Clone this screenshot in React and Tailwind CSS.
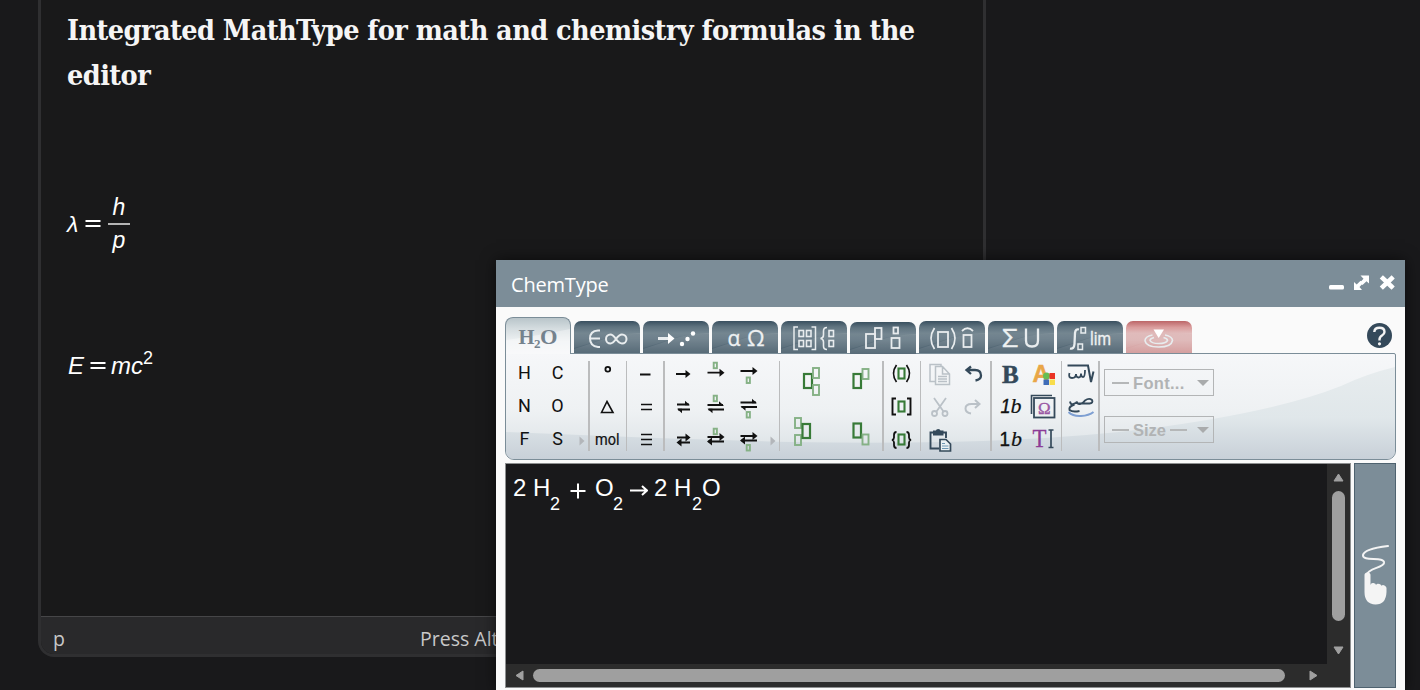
import React from "react";

const INK = "#111";
const SLATE = "#34495a";

/* ---------- shared drawing helpers ---------- */
function Cell({ children }) {
  return (
    <svg className="block h-[33px] w-[33px]" viewBox="0 0 33 33" fill="none">
      {children}
    </svg>
  );
}

function Sep({ thick }) {
  return <div className={thick ? "mt-[4px] h-[90px] w-[2px] shrink-0 bg-[#bbbcbd]" : "mt-[4px] h-[90px] w-px shrink-0 bg-[#bbbcbd]"} />;
}

function Glyph({ t, x = 16.5, y = 22, size = 18 }) {
  return (
    <Cell>
      <text x={x} y={y} textAnchor="middle" fontSize={size} fill={INK} fontFamily="Roboto, 'Liberation Sans', sans-serif">{t}</text>
    </Cell>
  );
}

const Box = ({ x, y, w, h, c = "#85b185", s = 1.9 }) => <rect x={x} y={y} width={w} height={h} stroke={c} strokeWidth={s} />;

const Right = ({ x1, x2, y, half }) => (
  <>
    <path d={`M${x1} ${y}H${x2 - 1}`} stroke={INK} strokeWidth="1.8" />
    <path d={half ? `M${x2 - 5} ${y - 3.8}L${x2} ${y + 0.8}H${x2 - 5}Z` : `M${x2 - 4.5} ${y - 4}L${x2 + 0.5} ${y}L${x2 - 4.5} ${y + 4}Z`} fill={INK} />
  </>
);
const Left = ({ x1, x2, y, half }) => (
  <>
    <path d={`M${x1 + 1} ${y}H${x2}`} stroke={INK} strokeWidth="1.8" />
    <path d={half ? `M${x1 + 5} ${y + 3.8}L${x1} ${y - 0.8}H${x1 + 5}Z` : `M${x1 + 4.5} ${y - 4}L${x1 - 0.5} ${y}L${x1 + 4.5} ${y + 4}Z`} fill={INK} />
  </>
);

/* ---------- tabs ---------- */
const tabText = { fontFamily: "'Open Sans', 'Noto Sans', sans-serif", fill: "#f0f2f3" };

function Tab({ children, red, low }) {
  return (
    <div
      className={
        (red
          ? "bg-[linear-gradient(#b95e60_0%,#d99898_20%,#dfb8b8_38%,#ddb6b6_60%,#d39a9a_100%)] "
          : "bg-[linear-gradient(#2f4757_0%,#576c79_18%,#6d808b_38%,#677a86_55%,#485d6b_100%)] ") +
        (low ? "mb-[-1px] " : "") +
        "relative h-[32px] w-[66px] shrink-0 overflow-hidden rounded-t-[7px]"
      }
    >
      <svg className="block h-[32px] w-[66px]" viewBox="0 0 66 32" fill="none">
        <path d="M0 27Q14 23 28 18T66 13V0H0Z" fill="#fff" opacity="0.05" />
        <path d="M0 28Q16 23 30 18T66 12V32H0Z" fill="#fff" opacity={red ? 0.06 : 0.09} />
        <g stroke="#e8ecee" strokeWidth="1.8">{children}</g>
      </svg>
    </div>
  );
}

function Tabs() {
  return (
    <div className="relative z-10 flex h-[37px] items-end gap-[3px]">
      <div className="mb-0 h-[37px] w-[66px] shrink-0 rounded-t-[8px] border border-b-0 border-[#7b8d98] bg-[linear-gradient(#b9c5ca_0%,#d5dde0_30%,#eef1f3_65%,#f5f6f8_100%)]">
        <svg className="block h-[36px] w-[64px]" viewBox="0 0 64 36">
          <path d="M0 22Q30 18 64 11V36H0Z" fill="#fff" opacity="0.35" />
          <g fontFamily="'Liberation Serif', serif" fontWeight="bold" fill="#74828d">
            <text x="12.5" y="26" fontSize="22" textLength="16" lengthAdjust="spacingAndGlyphs">H</text>
            <text x="28" y="30" fontSize="13">2</text>
            <text x="34" y="26" fontSize="22" textLength="17.5" lengthAdjust="spacingAndGlyphs">O</text>
          </g>
        </svg>
      </div>
      <div className="mb-[1px] flex items-end gap-[3px]">
        <Tab>
          <path d="M26 9.5H24Q16 10 16 17.5T24 26H26M17 17.5H26" strokeWidth="2" />
          <path d="M42 18C39.5 14.5 38 13.5 36.5 13.5A4.5 4.5 0 0 0 36.5 22.5C38 22.5 39.500 21.500 42 18S46 13.500 48 13.500A4.500 4.500 0 0 1 48 22.500C46 22.500 44.500 21.500 42 18Z" strokeWidth="2" />
        </Tab>
        <Tab>
          <path d="M15 17.500H27" strokeWidth="3" />
          <path d="M25 12L31.500 17.500L25 23Z" fill="#fff" stroke="none" />
          <g fill="#fff" stroke="none"><circle cx="39" cy="23" r="2.2" /><circle cx="44.500" cy="18" r="2.2" /><circle cx="50" cy="12.500" r="2.2" /></g>
        </Tab>
        <Tab>
          <g strokeWidth="0.3">
            <text x="15.500" y="25" fontSize="21" style={tabText}>α</text>
            <text x="35" y="25" fontSize="22.5" style={tabText}>Ω</text>
          </g>
        </Tab>
        <Tab>
          <path d="M17 6H13V28.500H17M30.500 6H34.500V28.500H30.500" strokeWidth="1.500" />
          <g strokeWidth="1.600"><rect x="18" y="9.500" width="4.500" height="6" /><rect x="25.500" y="9.500" width="4.500" height="6" /><rect x="18" y="19.500" width="4.500" height="6" /><rect x="25.500" y="19.500" width="4.500" height="6" />
            <rect x="48" y="9.500" width="4.500" height="6" /><rect x="48" y="19.500" width="4.500" height="6" /></g>
          <path d="M46 6.500Q42.500 6.500 42.500 10V14Q42.500 17 39.500 17.500Q42.500 18 42.500 21V25Q42.500 28.500 46 28.500" strokeWidth="1.600" />
        </Tab>
        <Tab low>
          <rect x="16" y="12" width="9" height="14" /><rect x="25" y="6" width="6.500" height="11" />
          <rect x="43.500" y="5.500" width="4.500" height="6" /><rect x="41.500" y="16" width="8" height="10" />
        </Tab>
        <Tab>
          <rect x="19" y="11" width="10" height="15" />
          <path d="M15.500 7Q8.500 17.500 15.500 28M32.500 7Q39.500 17.500 32.500 28" />
          <rect x="44.500" y="14" width="8" height="12" />
          <path d="M43 10Q48.500 4.500 54 10" />
        </Tab>
        <Tab>
          <text x="14" y="26" fontSize="25" strokeWidth="0.4" style={tabText} textLength="16" lengthAdjust="spacingAndGlyphs">Σ</text>
          <path d="M38 7.500V19.500Q38 25.500 44 25.500T50 19.500V7.500" strokeWidth="2.300" />
        </Tab>
        <Tab>
          <path d="M22 8.500Q18.500 7.500 18 12L17.500 23Q17 28.500 13 27.500" strokeWidth="2.300" />
          <rect x="24" y="6.500" width="4.500" height="5.500" strokeWidth="1.500" /><rect x="21" y="23" width="4.500" height="5.500" strokeWidth="1.500" />
          <text x="33" y="24" fontSize="18" strokeWidth="0.300" fill="#f0f2f3" fontFamily="Roboto" textLength="21" lengthAdjust="spacingAndGlyphs">lim</text>
        </Tab>
        <Tab red>
          <path d="M27.500 8.500H38L32.700 17Z" fill="#fff" stroke="none" />
          <path d="M26.500 14Q19 15.500 19 19.500Q20 26 32.700 26T46.500 19.500Q46.500 15.500 39 14" strokeWidth="1.600" />
          <path d="M28 16.500Q24 17.500 24 19.500Q25.500 22.500 32.700 22.500T41.500 19.500Q41.500 17.500 37.500 16.500" strokeWidth="1.600" />
        </Tab>
      </div>
      <div className="ml-auto mr-[4px] mb-[6px] flex h-[25px] w-[25px] items-center justify-center rounded-full bg-[#34495a]">
        <svg className="h-[25px] w-[25px]" viewBox="0 0 25 25" fill="none">
          <path d="M7.300 9Q7.500 4.800 12.500 4.800T17.500 9Q17.500 11 15 12.500Q12.500 14 12.500 16.500V17.500" stroke="#f4f4f4" strokeWidth="2.400" />
          <circle cx="12.500" cy="20.800" r="1.600" fill="#f4f4f4" />
        </svg>
      </div>
    </div>
  );
}

/* ---------- ribbon ---------- */
function More() {
  return (
    <svg className="mt-[79px] h-[10px] w-[6px] shrink-0" viewBox="0 0 6 10"><path d="M0.500 0.500L5.500 5L0.500 9.500Z" fill="#b3b6ba" /></svg>
  );
}

function Select({ children }) {
  return (
    <div className="flex h-[27px] w-[110px] items-center justify-between border border-[#b3b5b6] pl-[7px] pr-[4px] font-['Liberation_Sans',sans-serif] text-[17px] font-bold text-[#b1b3b4]">
      <div className="flex items-center gap-[4px]">{children}</div>
      <svg className="mt-px h-[6px] w-[12px]" viewBox="0 0 12 6"><path d="M0 0H12L6 6Z" fill="#a9abac" /></svg>
    </div>
  );
}

function Ribbon() {
  return (
    <div className="relative h-[107px] overflow-hidden rounded-b-[9px] rounded-tr-[2px] border border-[#7b8d98] bg-[linear-gradient(#f6f7f9_0%,#eef1f3_55%,#e3e8eb_80%,#d3dae0_100%)]">
      <svg className="absolute inset-0 h-full w-full" viewBox="0 0 889 105" preserveAspectRatio="none">
        <defs>
          <linearGradient id="wave" x1="0" y1="14" x2="0" y2="105" gradientUnits="userSpaceOnUse">
            <stop offset="0" stopColor="#e7ecee" /><stop offset="0.55" stopColor="#e0e7ea" /><stop offset="1" stopColor="#c8d0d8" />
          </linearGradient>
        </defs>
        <path d="M0 78Q130 84 284 88Q500 92 640 75Q770 58 835 32Q860 20 889 13V105H0Z" fill="url(#wave)" />
      </svg>
      <div className="relative flex pt-[3px]">
        <div className="flex w-[82px] pl-[2px]">
          <div className="grid grid-cols-2">
            {["H", "C", "N", "O", "F", "S"].map((t) => <Glyph key={t} t={t} />)}
          </div>
          <div className="ml-[5px] w-[6px]"><More /></div>
        </div>
        <Sep thick />
        <div className="w-[36px] pl-px">
          <Cell><circle cx="16.800" cy="12.200" r="2.400" stroke={INK} strokeWidth="1.800" /></Cell>
          <Cell><path d="M10.500 22.500L16 11.500L22 22.500Z" stroke={INK} strokeWidth="1.600" /></Cell>
          <Cell><text x="4" y="22" fontSize="16.500" fill={INK} stroke={INK} strokeWidth="0.200" fontFamily="Roboto, sans-serif" textLength="24.500" lengthAdjust="spacingAndGlyphs">mol</text></Cell>
        </div>
        <Sep />
        <div className="w-[36px] pl-px">
          <Cell><path d="M12 17.500H22.500" stroke={INK} strokeWidth="1.800" /></Cell>
          <Cell><path d="M13 14.500H24M13 19.500H24" stroke={INK} strokeWidth="1.700" /></Cell>
          <Cell><path d="M13 11.500H24M13 16.500H24M13 21.500H24" stroke={INK} strokeWidth="1.700" /></Cell>
        </div>
        <Sep thick />
        <div className="flex w-[114px] pl-px">
          <div className="grid shrink-0 grid-cols-3">
            <Cell><Right x1={10} x2={24} y={17} /></Cell>
            <Cell><Box x={14.700} y={5.700} w={3.200} h={5.500} /><Right x1={8.500} x2={25} y={15.700} /></Cell>
            <Cell><Right x1={8.500} x2={25} y={14} /><Box x={14.700} y={20.500} w={3.200} h={5.500} /></Cell>
            <Cell><Right half x1={11} x2={24} y={14.500} /><Left half x1={11} x2={24} y={19.500} /></Cell>
            <Cell><Box x={14.700} y={5.700} w={3.200} h={5.500} /><Right half x1={8.500} x2={25} y={15} /><Left half x1={8.500} x2={25} y={19.500} /></Cell>
            <Cell><Right half x1={8.500} x2={25} y={12.500} /><Left half x1={8.500} x2={25} y={17} /><Box x={14.700} y={22} w={3.200} h={5.500} /></Cell>
            <Cell><Right x1={11} x2={24} y={14.500} /><Left x1={11} x2={24} y={19.500} /></Cell>
            <Cell><Box x={14.700} y={5.700} w={3.200} h={5.500} /><Right x1={8.500} x2={25} y={14} /><Left x1={8.500} x2={25} y={18.500} /></Cell>
            <Cell><Right x1={8.500} x2={25} y={13} /><Left x1={8.500} x2={25} y={17.500} /><Box x={14.700} y={22} w={3.200} h={5.500} /></Cell>
          </div>
          <div className="ml-[5px]"><More /></div>
        </div>
        <Sep />
        <div className="grid h-[99px] w-[102px] grid-cols-2 grid-rows-2">
          <svg className="block h-[50px] w-[51px]" viewBox="0 0 51 50" fill="none">
            <Box x={24} y={17} w={8} h={14} c="#377a37" s={2.200} /><Box x={33} y={11} w={6} h={10} /><Box x={33} y={28} w={6} h={10} />
          </svg>
          <svg className="block h-[50px] w-[51px]" viewBox="0 0 51 50" fill="none">
            <Box x={22.500} y={17} w={7.500} h={14} c="#377a37" s={2.200} /><Box x={31.500} y={12} w={6} h={10} />
          </svg>
          <svg className="block h-[50px] w-[51px]" viewBox="0 0 51 50" fill="none">
            <Box x={15} y={11} w={6} h={10} /><Box x={15} y={28} w={6} h={10} /><Box x={22.500} y={17} w={7.500} h={14} c="#377a37" s={2.200} />
          </svg>
          <svg className="block h-[50px] w-[51px]" viewBox="0 0 51 50" fill="none">
            <Box x={22.500} y={16.500} w={7.500} h={14} c="#377a37" s={2.200} /><Box x={31.500} y={27.500} w={6} h={10} />
          </svg>
        </div>
        <Sep thick />
        <div className="w-[36px] pl-px">
          <Cell><Box x={13.500} y={11.500} w={6} h={10} c="#377a37" s={2.100} /><path d="M11.500 8Q5.500 16.500 11.500 25M21.500 8Q27.500 16.500 21.500 25" stroke={INK} strokeWidth="1.700" /></Cell>
          <Cell><Box x={13.500} y={11.500} w={6} h={10} c="#377a37" s={2.100} /><path d="M11 8.500H7.500V24.500H11M22 8.500H25.500V24.500H22" stroke={INK} strokeWidth="1.900" /></Cell>
          <Cell><Box x={13.500} y={11.500} w={6} h={10} c="#377a37" s={2.100} /><path d="M11.500 9Q9 9 9 12V14.500Q9 16.500 7 17Q9 17.500 9 19.500V22Q9 25 11.500 25M21.500 9Q24 9 24 12V14.500Q24 16.500 26 17Q24 17.500 24 19.500V22Q24 25 21.500 25" stroke={INK} strokeWidth="1.800" /></Cell>
        </div>
        <Sep />
        <div className="grid w-[69px] grid-cols-[33px_33px] pl-[2px]">
          <Cell>
            <g stroke="#bac1c7" strokeWidth="1.500"><path d="M12 24.500H7V7.500H18V9.500M12.500 9.500H19.500L26.500 17V27.500H12.500ZM19.500 9.500V17H26.500M15 19.500H24M15 22H24M15 24.500H24" /></g>
          </Cell>
          <Cell><path d="M15 9.500L10.500 13L15 17M11 13H19Q25 13 25 18.500Q25 22.500 19.500 23.500" stroke={SLATE} strokeWidth="2.300" /></Cell>
          <Cell>
            <g stroke="#bac1c7" strokeWidth="1.800"><path d="M11 8L20.500 21.500M23 8L13.500 21.500" /><circle cx="11.500" cy="23.500" r="2.500" /><circle cx="22" cy="23.500" r="2.500" /></g>
          </Cell>
          <Cell><path d="M19 10L23.500 14L19 18M23 14H15.500Q9.500 14 9.500 18.500Q9.500 22.500 15 23.500" stroke="#bac1c7" strokeWidth="2" /></Cell>
          <Cell>
            <path d="M10.500 9.500H7.500V25.500H16M20 9.500H23V15" stroke={SLATE} strokeWidth="1.900" />
            <path d="M10 7.500H13Q13 6 15.200 6T17.500 7.500H20.500V12.500H10Z" fill={SLATE} />
            <path d="M17 16.500H23L27.500 21V28H17Z" fill="#eaf0f3" stroke={SLATE} strokeWidth="1.700" />
            <path d="M19 20.500H22M19 23H25.500M19 25.500H25.500" stroke="#6c96b3" />
          </Cell>
        </div>
        <Sep thick />
        <div className="grid w-[69px] grid-cols-[33px_33px] pl-[2px]">
          <Cell><text x="8" y="25.500" fontSize="25" fontWeight="bold" fill={SLATE} fontFamily="Liberation Serif" stroke={SLATE} strokeWidth="0.500">B</text></Cell>
          <Cell>
            <text x="5.500" y="24.500" fontSize="23.500" fontWeight="bold" fill="#e9a647" stroke="#e9a647" strokeWidth="0.500" fontFamily="Liberation Sans">A</text>
            <circle cx="19.500" cy="19" r="3.500" fill="#65bd52" /><rect x="22.500" y="16" width="5.500" height="6" fill="#ea3324" /><rect x="16.500" y="22.500" width="5.500" height="5.500" fill="#3e6cb8" /><rect x="22.500" y="22.500" width="5.500" height="5.500" fill="#f8dd4b" />
          </Cell>
          <Cell>
            <text x="6.500" y="23" fontSize="19.500" fontStyle="italic" fill={INK} stroke={INK} strokeWidth="0.400" fontFamily="Liberation Sans" textLength="10" lengthAdjust="spacingAndGlyphs">1</text>
            <text x="16.500" y="23" fontSize="22" fontStyle="italic" fill={INK} stroke={INK} strokeWidth="0.200" fontFamily="Liberation Serif">b</text>
          </Cell>
          <Cell>
            <path d="M4.500 24V5.500H25" stroke={SLATE} strokeWidth="1.600" /><rect x="7" y="8" width="20.500" height="19.500" stroke={SLATE} strokeWidth="1.800" />
            <text x="17.200" y="23.500" fontSize="17" textAnchor="middle" fill="#9a57a3" stroke="#9a57a3" strokeWidth="0.400" fontFamily="Liberation Serif">Ω</text>
          </Cell>
          <Cell>
            <text x="5.500" y="23" fontSize="19.500" fill={INK} stroke={INK} strokeWidth="0.400" fontFamily="Liberation Sans" textLength="10.500" lengthAdjust="spacingAndGlyphs">1</text>
            <text x="17" y="23" fontSize="22" fontStyle="italic" fill={INK} stroke={INK} strokeWidth="0.200" fontFamily="Liberation Serif">b</text>
          </Cell>
          <Cell>
            <text x="5.500" y="24" fontSize="25" fill="#8c3b96" stroke="#8c3b96" strokeWidth="0.300" fontFamily="Liberation Serif" textLength="14" lengthAdjust="spacingAndGlyphs">T</text>
            <path d="M21.500 7H26.500M24 7V24.500M21.500 24.500H26.500" stroke={SLATE} strokeWidth="1.700" />
          </Cell>
        </div>
        <Sep />
        <div className="w-[36px] pl-[2px]">
          <Cell>
            <path d="M3.500 8.500H24L27 25L29.500 14.500" stroke={SLATE} strokeWidth="2" />
            <path d="M5.500 16Q4 21 8 21T12 17M12 17Q12 20.500 14.500 20.500T17 16.500Q17 20 19 20T21 13" stroke={SLATE} strokeWidth="1.800" />
          </Cell>
          <Cell>
            <path d="M6 11.500Q6.500 15 9.500 14T13 11.500Q13 14.500 16 14T21 10.500Q25 7.500 28 10Q29.500 13 25.500 13.500H14M10.500 14.500Q4.500 16.500 5.500 20Q8.500 22.500 15.500 21" stroke={SLATE} strokeWidth="1.900" />
            <path d="M4.500 22Q9 26.500 17 26T29.500 22" stroke="#7e9fd2" strokeWidth="2" />
          </Cell>
        </div>
        <Sep thick />
        <div className="flex flex-col gap-[20px] pl-[4px] pt-[12px]">
          <Select><span className="h-[2px] w-[17px] bg-[#b5b7b8]" /><span className="mt-px text-[16.500px] tracking-[0.300px]">Font...</span></Select>
          <Select><span className="h-[2px] w-[17px] bg-[#b5b7b8]" /><span className="mt-[2px] text-[16.500px]">Size</span><span className="h-[2px] w-[17px] bg-[#b5b7b8]" /></Select>
        </div>
      </div>
    </div>
  );
}

/* ---------- formula canvas ---------- */
function Canvas() {
  const two = "w-[20px]";
  const sub = "top-0 pt-[20px] text-[18px] leading-[20px]";
  return (
    <div className="flex h-[225px] w-[846px] flex-col border border-[#8d8f90] bg-[#2c2c2c]">
      <div className="flex h-[200px]">
        <div className="w-[821px] bg-[#19191b] pl-[7px] pt-[10px] font-['Liberation_Sans',sans-serif] text-[24px] leading-[27px] text-white">
          <div className="flex whitespace-nowrap">
            <span className={two}>2</span>
            <span className="w-[17px]">H</span>
            <sub className={sub + " w-[20px]"}>2</sub>
            <svg className="mr-[9px] mt-[9px] h-[16px] w-[16px] shrink-0" viewBox="0 0 16 16"><path d="M0.500 8H15.500M8 0.500V15.500" stroke="#fff" strokeWidth="2" /></svg>
            <span className="w-[18px]">O</span>
            <sub className={sub + " w-[17px]"}>2</sub>
            <svg className="mr-[6px] mt-[10px] h-[14px] w-[18px] shrink-0" viewBox="0 0 18 14" fill="none"><path d="M0 6.500H17M12 2L17 6.500L12 11" stroke="#fff" strokeWidth="2" /></svg>
            <span className={two}>2</span>
            <span className="w-[18px]">H</span>
            <sub className={sub + " w-[10px]"}>2</sub>
            <span>O</span>
          </div>
        </div>
        <div className="flex flex-1 flex-col items-center pt-[9px]">
          <svg className="h-[9px] w-[11px]" viewBox="0 0 11 9"><path d="M5.500 1L10 8H1Z" fill="#a0a0a0" stroke="#a0a0a0" strokeLinejoin="round" /></svg>
          <div className="mt-[9px] h-[130px] w-[13px] rounded-full bg-[#9f9f9f]" />
          <svg className="mt-[25px] h-[9px] w-[11px]" viewBox="0 0 11 9"><path d="M5.500 8L10 1H1Z" fill="#a0a0a0" stroke="#a0a0a0" strokeLinejoin="round" /></svg>
        </div>
      </div>
      <div className="flex flex-1 items-center pl-[9px]">
        <svg className="h-[11px] w-[9px]" viewBox="0 0 9 11"><path d="M1 5.500L8 1V10Z" fill="#a0a0a0" stroke="#a0a0a0" strokeLinejoin="round" /></svg>
        <div className="ml-[9px] h-[13px] w-[752px] rounded-full bg-[#9f9f9f]" />
        <svg className="ml-[24px] h-[11px] w-[9px]" viewBox="0 0 9 11"><path d="M8 5.500L1 1V10Z" fill="#a0a0a0" stroke="#a0a0a0" strokeLinejoin="round" /></svg>
      </div>
    </div>
  );
}

function Dialog() {
  return (
    <div className="absolute left-[496px] top-[260px] h-[430px] w-[909px] bg-[#fafafa] shadow-[0_0_14px_rgba(0,0,0,0.6)]">
      <div className="flex h-[47px] items-center bg-[#7c8d98] pl-[15px] pr-[10px]">
        <span className="mt-[2px] font-['Open_Sans','Noto_Sans',sans-serif] text-[20px] leading-none tracking-[-0.200px] text-white">ChemType</span>
        <svg className="ml-auto h-[17px] w-[66px]" viewBox="0 0 66 17" fill="none">
          <rect x="0" y="10" width="15" height="4.500" rx="1.500" fill="#fff" />
          <path d="M31.500 0.500H40V8.500L37.500 6.300L33.500 10L31 7.500L34.500 3.700Z" fill="#fff" />
          <path d="M25 15V7L27.700 9.500L31.500 5.800L34 8.300L30.500 12L33 15Z" fill="#fff" />
          <path d="M54 3.500L62.500 11.500M62.500 3.500L54 11.500" stroke="#fff" strokeWidth="4.600" strokeLinecap="square" />
        </svg>
      </div>
      <div className="px-[9px] pt-[10px]">
        <Tabs />
        <div className="mt-[-1px]"><Ribbon /></div>
        <div className="mt-[3px] flex justify-between">
          <Canvas />
          <div className="flex h-[225px] w-[42px] justify-center border border-[#4e626f] bg-[#7c8d98] pt-[80px]">
            <svg className="h-[62px] w-[30px]" viewBox="0 0 30 62" fill="none">
              <path d="M28 2Q4 5 3 11C2 18 25 12 24 19C23 24 8 24 6.500 31" stroke="#f4f4f4" strokeWidth="2" strokeLinecap="round" />
              <path d="M4.500 31Q4.500 28.500 7.500 28.500T10.500 31V41Q11 38.500 13.500 39T16 41Q17 39 19.500 40T21.500 42Q22.500 40.500 24.500 41.500T26.500 44V48Q26 60.500 15.500 60.500Q4.500 60 4.500 48Z" fill="#f4f4f4" />
            </svg>
          </div>
        </div>
      </div>
    </div>
  );
}

export default function App() {
  return (
    <div className="relative h-[690px] w-[1420px] overflow-hidden bg-[#19191b]">
      <div className="ml-[38px] flex h-[657px] w-[948px] flex-col overflow-hidden rounded-b-[16px] border-[3px] border-t-0 border-[#2f2f31] bg-[#19191a]">
        <div className="flex-1 pl-[26px] pt-[8px] text-[#f5f5f5]">
          <h2 className="h-[90px] whitespace-nowrap font-['DejaVu_Serif_Condensed','DejaVu_Serif',serif] text-[28.500px] font-bold leading-[45px] tracking-[-0.550px]">
            Integrated MathType for math and chemistry formulas in the
            <br />
            editor
          </h2>
          <div className="mt-[96px] flex h-[60px] items-center font-['Liberation_Sans',sans-serif] text-[23px] italic leading-none text-white">
            <span className="w-[18px]">λ</span>
            <svg className="mr-[7px] h-[10px] w-[16px]" viewBox="0 0 16 10"><path d="M0.500 2H15.500M0.500 7H15.500" stroke="#fff" strokeWidth="2" /></svg>
            <div className="flex w-[22px] flex-col items-center">
              <span className="pb-[4px]">h</span>
              <span className="h-[2px] w-full bg-[#b5b5b5]" />
              <span className="pt-[4px]">p</span>
            </div>
          </div>
          <div className="mt-[98px] flex whitespace-nowrap pl-px font-['Liberation_Sans',sans-serif] text-[24px] leading-[27px] text-white">
            <span className="w-[22px] italic">E</span>
            <svg className="mr-[5px] mt-[9px] h-[10px] w-[16px]" viewBox="0 0 16 10"><path d="M0.500 2H15.500M0.500 7H15.500" stroke="#fff" strokeWidth="2" /></svg>
            <span className="italic">mc</span>
            <sup className="top-[-4px] text-[18px] leading-[20px]">2</sup>
          </div>
        </div>
        <div className="flex h-[38px] shrink-0 items-center border-t border-[#464648] bg-[#29292b] pl-[12px] pt-[6px] font-['Open_Sans','Noto_Sans',sans-serif] text-[19.500px] leading-none text-[#c8c8c9]">
          <span className="w-[367px]">p</span>
          <span className="whitespace-nowrap">Press Alt+0 for help</span>
        </div>
      </div>
      <Dialog />
    </div>
  );
}
